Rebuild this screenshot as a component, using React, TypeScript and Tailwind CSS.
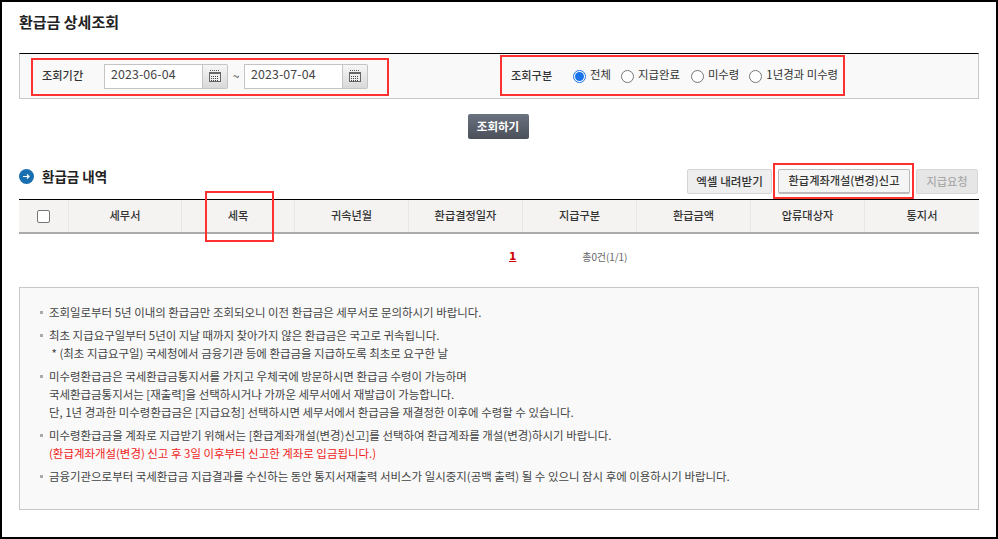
import * as React from "react"

const font = { fontFamily: '"Noto Sans CJK KR", "Liberation Sans", sans-serif' }

function CalendarIcon() {
  return (
    <svg width="14" height="13" viewBox="0 0 14 13" className="block">
      <path d="M2 0.5h10" stroke="#555" strokeDasharray="1 1" fill="none" />
      <rect x="1.5" y="2.5" width="11" height="9" fill="#efefef" stroke="#666" />
      <rect x="1" y="2" width="12" height="2" fill="#666" />
      <path d="M3 6.5h8M3 8.5h8M3 10.5h8" stroke="#444" strokeDasharray="1 1" fill="none" />
    </svg>
  )
}

function DateField({ value }: { value: string }) {
  return (
    <div className="flex h-[25px]">
      <div className="flex w-[99px] items-center border border-[#c4c4c4] bg-white pb-[3px] pl-[6px] text-[12.4px] leading-none tracking-[0.1px] text-[#444]">
        {value}
      </div>
      <div className="flex w-[25px] items-center justify-center rounded-r-[2px] border border-l-0 border-[#c4c4c4] bg-gradient-to-b from-[#f6f6f6] to-[#d9d9d9]">
        <CalendarIcon />
      </div>
    </div>
  )
}

function Radio({ label, checked, gap }: { label: string; checked?: boolean; gap: string }) {
  return (
    <div className={`flex items-center gap-[4px] ${gap}`}>
      {checked ? (
        <span className="flex size-[13px] items-center justify-center rounded-full border border-[#1a73e8] bg-white">
          <span className="size-[9px] rounded-full bg-[#1a73e8]" />
        </span>
      ) : (
        <span className="size-[13px] rounded-full border border-[#767676] bg-white" />
      )}
      <span className="-mt-[2px] text-[11.4px] leading-none text-[#333]">{label}</span>
    </div>
  )
}

const columns = ["세무서", "세목", "귀속년월", "환급결정일자", "지급구분", "환급금액", "압류대상자", "통지서"]

function Note({ children }: { children: React.ReactNode }) {
  return (
    <div className="relative pl-[29px] text-[11.45px] leading-[18px] text-[#444]">
      <span className="absolute left-[20px] top-[8px] size-[3px] bg-[#aaa]" />
      {children}
    </div>
  )
}

export default function App() {
  return (
    <div
      style={font}
      className="h-[539px] w-[998px] overflow-hidden border-2 border-black bg-white"
    >
      <div className="pl-[17px] pr-[17px]">
        <h1 className="pt-[9px] text-[15px] font-bold leading-[22px] text-[#222]">환급금 상세조회</h1>

        {/* search panel */}
        <div className="relative mt-[20px] flex h-[46px] items-center border border-t-black border-[#c8c8c8] bg-[#f9f9f9]">
          <div className="flex items-center">
            <span className="ml-[22px] w-[62px] text-[11.2px] font-medium leading-none text-[#333]">조회기간</span>
            <DateField value="2023-06-04" />
            <span className="w-[16px] text-center text-[12px] text-[#444]">~</span>
            <DateField value="2023-07-04" />
          </div>
          <div className="ml-[143px] flex items-center">
            <span className="w-[62px] text-[11.2px] font-medium leading-none text-[#333]">조회구분</span>
            <Radio label="전체" checked gap="mr-[10px]" />
            <Radio label="지급완료" gap="mr-[11px]" />
            <Radio label="미수령" gap="mr-[10px]" />
            <Radio label="1년경과 미수령" gap="" />
          </div>
          <div className="absolute left-[11px] top-[4px] h-[38px] w-[358px] border-2 border-[#ff3030]" />
          <div className="absolute left-[480px] top-[1px] h-[41px] w-[345px] border-2 border-[#ff3030]" />
        </div>

        <div className="mt-[15px] flex justify-center pr-[2px]">
          <button className="h-[25px] w-[61px] rounded-[2px] bg-gradient-to-b from-[#6b7280] to-[#4b5059] text-[11.5px] font-bold leading-none text-white">
            조회하기
          </button>
        </div>

        {/* list header */}
        <div className="mt-[27px] flex h-[33px] items-center justify-between">
          <div className="flex items-center gap-[8px] pb-[12px]">
            <span className="flex size-[15px] items-center justify-center rounded-full bg-[#1a6fb0]">
              <svg width="9" height="9" viewBox="0 0 9 9">
                <path d="M1 4.5h6M5 2.5l2 2-2 2" stroke="#fff" strokeWidth="1.2" fill="none" />
              </svg>
            </span>
            <h2 className="text-[13.5px] font-bold leading-none text-[#222]">환급금 내역</h2>
          </div>
          <div className="relative mb-[2px] mr-[1px] flex items-center gap-[6px]">
            <button className="h-[25px] w-[85px] rounded-[2px] border border-[#d4d4d4] bg-[#eeeeee] text-[11.6px] font-medium leading-none text-[#333]">
              엑셀 내려받기
            </button>
            <button className="h-[25px] w-[132px] rounded-[2px] border border-b-[2px] border-[#bbb] bg-[#f5f5f5] text-[11.2px] font-medium leading-none text-[#333]">
              환급계좌개설(변경)신고
            </button>
            <button className="h-[25px] w-[62px] rounded-[2px] border border-[#d8d8d8] bg-[#e6e6e6] text-[11.2px] font-medium leading-none text-[#aaa]">
              지급요청
            </button>
            <div className="absolute left-[86px] top-[-6px] h-[36px] w-[141px] border-2 border-[#ff3030]" />
          </div>
        </div>

        {/* table head */}
        <div className="relative grid h-[35px] grid-cols-[50px_113px_113px_114px_114px_114px_114px_114px_114px] border-b-2 border-t border-b-[#aaaaaa] border-t-black bg-[#f4f3f2]">
          <div className="flex items-center justify-center border-r border-[#e6e6e6]">
            <span className="size-[13px] rounded-[2px] border border-[#767676] bg-white" />
          </div>
          {columns.map((c, i) => (
            <div
              key={c}
              className={`flex items-center justify-center text-[11.2px] font-medium leading-none text-[#333] ${
                i < columns.length - 1 ? "border-r border-[#e6e6e6]" : ""
              }`}
            >
              {c}
            </div>
          ))}
          <div className="absolute left-[186px] top-[-9px] h-[51px] w-[69px] border-2 border-[#ff3030]" />
        </div>

        {/* pagination */}
        <div className="flex h-[53px] items-center pb-[9px]">
          <span className="ml-[490px] font-['DejaVu_Sans'] text-[10.5px] font-bold leading-none text-[#c00] underline">1</span>
          <span className="ml-[66px] mt-[2px] text-[10px] leading-none tracking-[-0.1px] text-[#666]">총0건(1/1)</span>
        </div>

        {/* notes */}
        <div className="flex h-[223px] flex-col gap-[5px] border border-[#c8c8c8] bg-[#f9f9f9] pt-[15px]">
          <Note>조회일로부터 5년 이내의 환급금만 조회되오니 이전 환급금은 세무서로 문의하시기 바랍니다.</Note>
          <Note>
            최초 지급요구일부터 5년이 지날 때까지 찾아가지 않은 환급금은 국고로 귀속됩니다.
            <br />
            &nbsp;* (최초 지급요구일) 국세청에서 금융기관 등에 환급금을 지급하도록 최초로 요구한 날
          </Note>
          <Note>
            미수령환급금은 국세환급금통지서를 가지고 우체국에 방문하시면 환급금 수령이 가능하며
            <br />
            국세환급금통지서는 [재출력]을 선택하시거나 가까운 세무서에서 재발급이 가능합니다.
            <br />
            단, 1년 경과한 미수령환급금은 [지급요청] 선택하시면 세무서에서 환급금을 재결정한 이후에 수령할 수 있습니다.
          </Note>
          <Note>
            미수령환급금을 계좌로 지급받기 위해서는 [환급계좌개설(변경)신고]를 선택하여 환급계좌를 개설(변경)하시기 바랍니다.
            <br />
            <span className="text-[#f01c1c]">(환급계좌개설(변경) 신고 후 3일 이후부터 신고한 계좌로 입금됩니다.)</span>
          </Note>
          <Note>금융기관으로부터 국세환급금 지급결과를 수신하는 동안 통지서재출력 서비스가 일시중지(공백 출력) 될 수 있으니 잠시 후에 이용하시기 바랍니다.</Note>
        </div>
      </div>
    </div>
  )
}
